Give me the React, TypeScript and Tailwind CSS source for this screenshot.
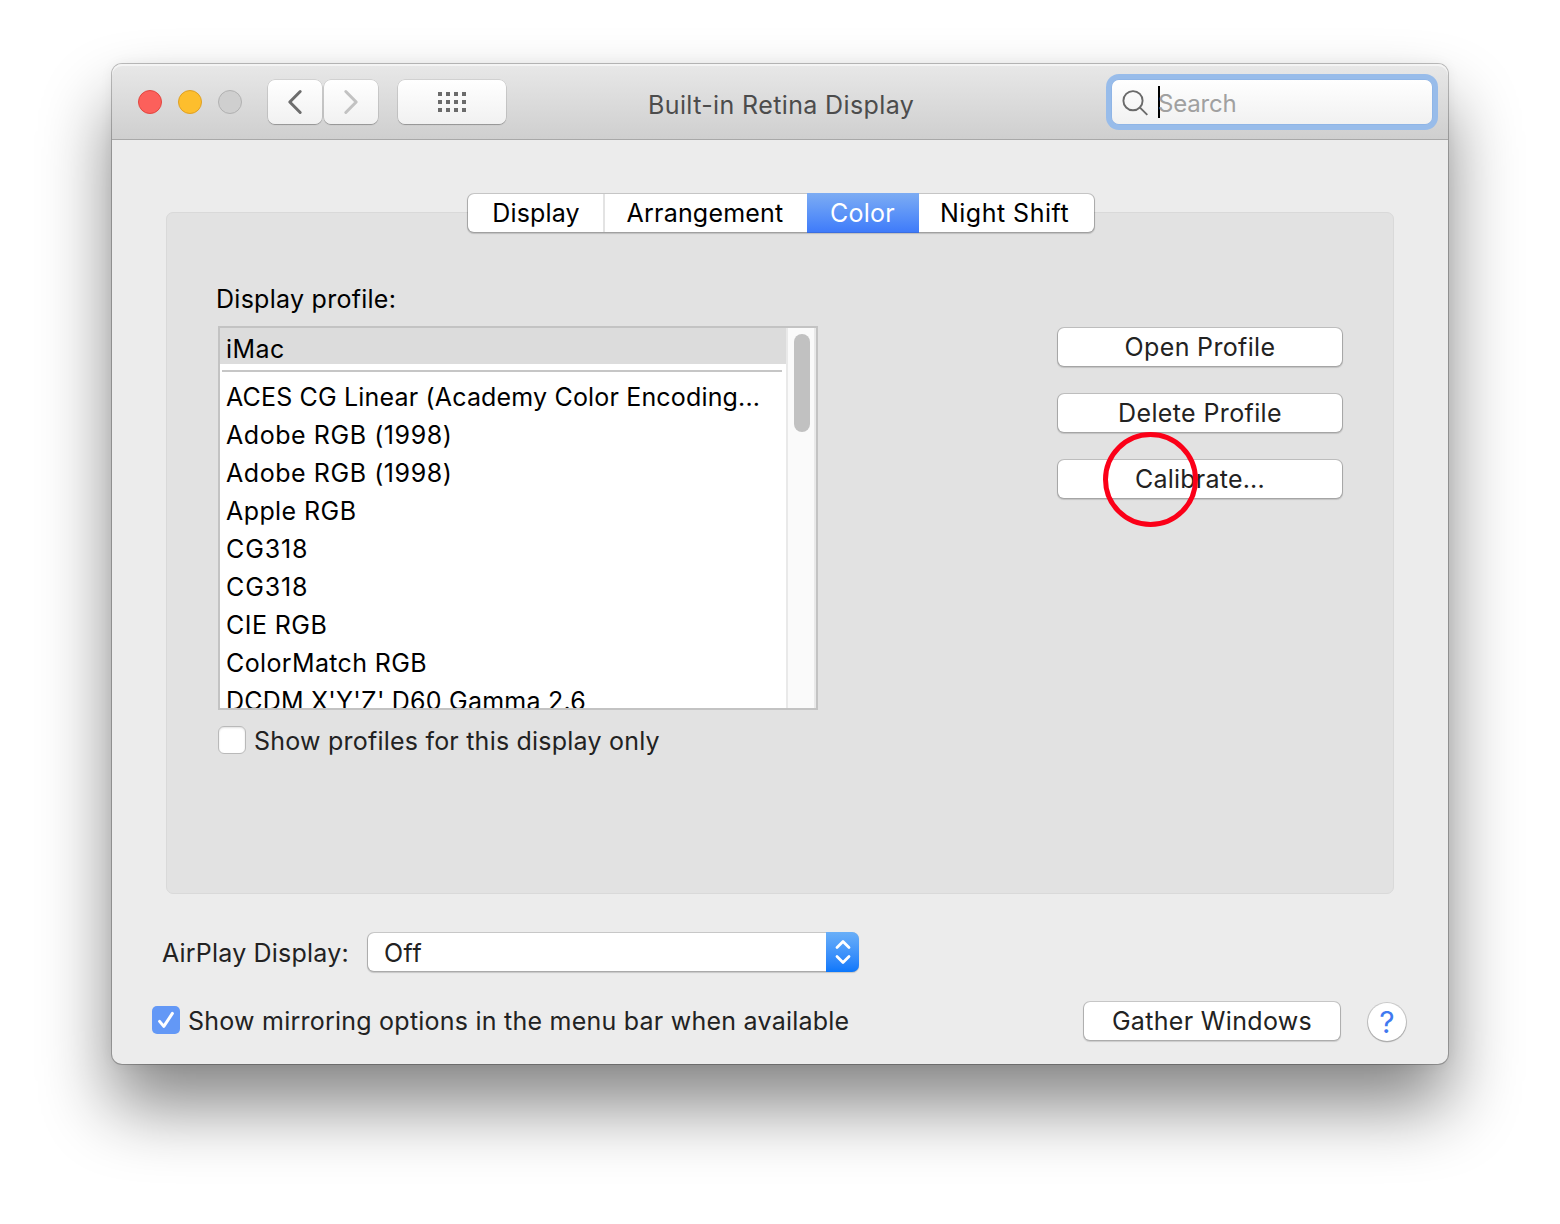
import React from "react";

const profiles: { name: string; tracking: string }[] = [
  { name: "ACES CG Linear (Academy Color Encoding...", tracking: "tracking-[0.17px]" },
  { name: "Adobe RGB (1998)", tracking: "tracking-[0.56px]" },
  { name: "Adobe RGB (1998)", tracking: "tracking-[0.56px]" },
  { name: "Apple RGB", tracking: "tracking-[0.42px]" },
  { name: "CG318", tracking: "tracking-[0.9px]" },
  { name: "CG318", tracking: "tracking-[0.9px]" },
  { name: "CIE RGB", tracking: "tracking-[0.45px]" },
  { name: "ColorMatch RGB", tracking: "tracking-[0.37px]" },
  { name: "DCDM X'Y'Z' D60 Gamma 2.6", tracking: "tracking-[0.22px]" },
];

function TrafficLights() {
  return (
    <div className="flex gap-4">
      <span className="size-6 rounded-full border border-[#e2463f] bg-[#fc605b]" />
      <span className="size-6 rounded-full border border-[#dfa023] bg-[#fdbe2d]" />
      <span className="size-6 rounded-full border border-[#b1b1b1] bg-[#cfcfcf]" />
    </div>
  );
}

function ToolbarButton({ className, children }: { className: string; children: React.ReactNode }) {
  return (
    <button
      className={`flex h-[44px] items-center justify-center rounded-[7px] bg-gradient-to-b from-white to-[#f1f1f1] shadow-[0_0_0_0.5px_rgba(0,0,0,0.16),0_1px_1px_0_rgba(0,0,0,0.24)] ${className}`}
    >
      {children}
    </button>
  );
}

function PushButton({ className, children }: { className: string; children: React.ReactNode }) {
  return (
    <button
      className={`flex h-[38px] items-center justify-center rounded-[6px] bg-white text-[#222] shadow-[0_0_0_1px_rgba(0,0,0,0.15),0_1px_1px_0.5px_rgba(0,0,0,0.14)] ${className}`}
    >
      {children}
    </button>
  );
}

function TitleBar() {
  return (
    <header className="flex h-[76px] items-center rounded-t-[10px] border-b border-[#a8a8a8] bg-gradient-to-b from-[#e8e8e8] to-[#cfcfcf] pr-4 pl-[26px] shadow-[inset_0_2px_0_#f4f4f4]">
      <TrafficLights />
      <ToolbarButton className="ml-[26px] w-[54px]">
        <svg width="16" height="26" viewBox="0 0 16 26" fill="none" stroke="#6d6d6d" strokeWidth="3" strokeLinecap="round" strokeLinejoin="round">
          <path d="M13.2 2.5 2.8 13l10.4 10.5" />
        </svg>
      </ToolbarButton>
      <ToolbarButton className="ml-[2px] w-[54px]">
        <svg width="16" height="26" viewBox="0 0 16 26" fill="none" stroke="#c2c2c2" strokeWidth="3" strokeLinecap="round" strokeLinejoin="round">
          <path d="M2.8 2.5 13.2 13 2.8 23.5" />
        </svg>
      </ToolbarButton>
      <ToolbarButton className="ml-5 w-[108px]">
        <span className="grid grid-cols-4 gap-1">
          {Array.from({ length: 12 }, (_, i) => (
            <span key={i} className="size-1 bg-[#6b6b6b]" />
          ))}
        </span>
      </ToolbarButton>
      <h1 className="ml-[142px] pt-[7px] tracking-[0.38px] whitespace-nowrap text-[#4c4c4c]">Built-in Retina Display</h1>
      <div className="ml-auto flex h-[44px] w-[320px] items-center rounded-[7px] bg-gradient-to-b from-white to-[#f1f1f1] pl-[9px] shadow-[0_0_0_0.5px_#86aee2,0_0_0_6px_#98bcea]">
        <svg width="28" height="28" viewBox="0 0 28 28" fill="none" stroke="#6a6a6a" strokeWidth="1.9">
          <circle cx="12" cy="12.7" r="9.6" />
          <path d="m19 19.6 7.3 7.3" />
        </svg>
        <span className="ml-[9px] h-8 w-[2px] bg-black" />
        <span className="-ml-[2px] pt-[4px] text-2xl tracking-[-0.2px] text-[#a0a0a0]">Search</span>
      </div>
    </header>
  );
}

function Tabs() {
  return (
    <nav className="relative ml-[302px] flex h-[38px] w-[626px] rounded-[6px] bg-white text-black shadow-[0_0_0_1px_rgba(0,0,0,0.15),0_1px_1px_0.5px_rgba(0,0,0,0.16)]">
      <button className="w-[137px] border-r-2 border-[#e3e3e3] pl-[1px] tracking-[0.15px]">Display</button>
      <button className="w-[202px] pr-[2px] tracking-[0.2px]">Arrangement</button>
      <button className="-my-px w-[112px] border-b border-[#3b6ee0] bg-gradient-to-b from-[#7dacf3] to-[#3f7bfa] pr-px tracking-[0.25px] text-white">Color</button>
      <button className="w-[175px] pr-[4px] tracking-[0.5px]">Night Shift</button>
    </nav>
  );
}

function ProfileList() {
  return (
    <div className="flex h-[384px] w-[600px] overflow-hidden border-2 border-[#c3c3c3] bg-white text-black">
      <div className="w-[566px]">
        <div className="h-9 bg-[#dcdcdc] pl-[6px] leading-[42px] tracking-[0.4px]">iMac</div>
        <div className="mt-[6px] mr-1 mb-[6px] ml-[2px] h-[2px] bg-[#c6c6c6]" />
        {profiles.map((p, i) => (
          <div key={i} className={`h-[38px] pl-[6px] leading-[38px] whitespace-nowrap ${p.tracking}`}>
            {p.name}
          </div>
        ))}
      </div>
      <div className="w-[30px] border-x-2 border-[#e9e9e9] bg-[#fafafa] pt-[6px] pl-[6px]">
        <div className="h-[98px] w-4 rounded-full bg-[#c1c1c1]" />
      </div>
    </div>
  );
}

function ColorPanel() {
  return (
    <section className="-mt-[20px] flex h-[682px] justify-between rounded-[7px] border border-[#d9d9d9] bg-[#e2e2e2] pr-[51px] pl-[51px]">
      <div className="pt-[67px]">
        <p className="-ml-[2px] h-[38px] leading-[38px] tracking-[0.27px] text-black">Display profile:</p>
        <div className="mt-[8px]">
          <ProfileList />
        </div>
        <label className="mt-4 flex items-start text-[#222]">
          <span className="size-7 rounded-[6px] border border-[#b9b9b9] bg-white shadow-[inset_0_1px_2px_rgba(0,0,0,0.12)]" />
          <span className="ml-2 pt-px leading-[28px] tracking-[0.22px]">Show profiles for this display only</span>
        </label>
      </div>
      <div className="relative mt-[115px] flex flex-col gap-7">
        <PushButton className="w-[284px] tracking-[0.34px]">Open Profile</PushButton>
        <PushButton className="w-[284px] tracking-[0.38px]">Delete Profile</PushButton>
        <PushButton className="w-[284px] tracking-[0.22px]">Calibrate...</PushButton>
        <span className="absolute top-[104px] left-[45px] size-[95px] rounded-full border-[5px] border-[#fb0018]" />
      </div>
    </section>
  );
}

function Footer() {
  return (
    <footer className="text-[#222]">
      <div className="mt-[39px] ml-[-4px] flex h-[38px] items-center">
        <span className="w-[206px] pt-[1px] tracking-[0.2px]">AirPlay Display:</span>
        <div className="flex h-[38px] w-[490px] rounded-[6px] bg-white shadow-[0_0_0_1px_rgba(0,0,0,0.14),0_1px_1px_0.5px_rgba(0,0,0,0.16)]">
          <span className="flex-1 pl-[16px] leading-[40px] tracking-[0.5px]">Off</span>
          <span className="-my-px -mr-px flex w-[33px] items-center justify-center rounded-r-[7px] bg-gradient-to-b from-[#69aff8] to-[#0a77fb]">
            <svg width="20" height="28" viewBox="0 0 20 28" fill="none" stroke="white" strokeWidth="2.8" strokeLinecap="round" strokeLinejoin="round">
              <path d="m4 9.5 6-6 6 6M4 18.5l6 6 6-6" />
            </svg>
          </span>
        </div>
      </div>
      <div className="mt-[30px] -mr-[12px] ml-[-14px] flex h-10 items-center">
        <span className="-mt-[2px] flex size-7 items-center justify-center rounded-[5px] bg-[#6398f6]">
          <svg width="20" height="20" viewBox="0 0 20 20" fill="none" stroke="white" strokeWidth="3" strokeLinecap="round" strokeLinejoin="round">
            <path d="m3.6 11.4 4.2 5L16.4 3.4" />
          </svg>
        </span>
        <span className="-mt-px ml-2 tracking-[0.235px] whitespace-nowrap">Show mirroring options in the menu bar when available</span>
        <PushButton className="ml-auto w-[256px] tracking-[0.33px]">Gather Windows</PushButton>
        <button className="mt-[2px] ml-7 size-[38px] rounded-full bg-white text-[30px] leading-[38px] text-[#4079f0] shadow-[0_0_0_1px_rgba(0,0,0,0.14),0_1px_1px_0.5px_rgba(0,0,0,0.16)]">
          ?
        </button>
      </div>
    </footer>
  );
}

export default function App() {
  return (
    <div className="h-[1224px] w-[1560px] overflow-hidden bg-white pt-16 pl-28 font-['Inter',sans-serif] text-[25px] leading-[30px]">
      <main className="h-[1000px] w-[1336px] rounded-[10px] bg-[#ececec] shadow-[0_0_0_1px_rgba(0,0,0,0.24),0_0_14px_rgba(0,0,0,0.06),0_42px_70px_rgba(0,0,0,0.48)]">
        <TitleBar />
        <div className="px-[54px] pt-[54px]">
          <Tabs />
          <ColorPanel />
          <Footer />
        </div>
      </main>
    </div>
  );
}
